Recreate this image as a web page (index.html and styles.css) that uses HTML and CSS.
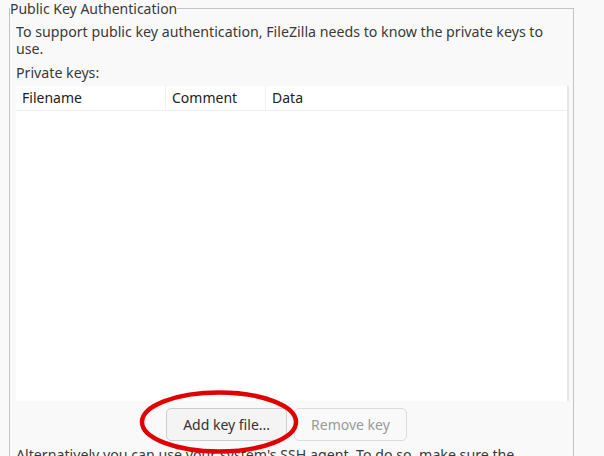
FILE: index.html
```html
<!DOCTYPE html>
<html>
<head>
<meta charset="utf-8">
<link rel="stylesheet" href="styles.css">
</head>
<body>
<div class="page">
  <fieldset class="group">
    <legend class="group-title">Public Key Authentication</legend>
    <div class="group-body">
      <p class="intro">To support public key authentication, FileZilla needs to know the private keys to use.</p>
      <p class="label">Private keys:</p>
      <div class="list">
        <div class="list-head">
          <div class="col col-file">Filename</div>
          <div class="col col-comment">Comment</div>
          <div class="col col-data">Data</div>
        </div>
        <div class="list-rows"></div>
      </div>
      <div class="buttons">
        <button class="btn">Add key file...</button>
        <button class="btn btn-disabled" disabled>Remove key</button>
      </div>
      <p class="intro">Alternatively you can use your system's SSH agent. To do so, make sure the</p>
    </div>
  </fieldset>
  <svg class="mark" width="164" height="68" viewBox="0 0 164 68">
    <ellipse cx="82" cy="34" rx="77" ry="29.5" fill="none" stroke="#e00000" stroke-width="4.5"/>
  </svg>
</div>
</body>
</html>
```
FILE: styles.css
```css
html, body {
  margin: 0;
  padding: 0;
  background: #f9f9f9;
  overflow: hidden;
}
body {
  width: 604px;
  height: 456px;
  font-family: "Noto Sans", sans-serif;
  font-size: 14px;
  color: #3a3a3a;
}
.page {
  position: relative;
  padding-left: 9px;
  width: 565px;
}
.group {
  margin: 0;
  padding: 0 4px 0 0;
  border: 1px solid #c4c4c4;
  border-bottom: none;
  min-width: 0;
  height: 470px;
  box-sizing: border-box;
}
.group-title {
  padding: 0;
  margin-left: 0;
  line-height: 17px;
  color: #3a3a3a;
}
.group-body {
  padding: 6px 0 0 6px;
}
.intro {
  margin: 0;
  font-size: 14.2px;
  line-height: 17px;
}
.label {
  margin: 7px 0 5px;
  font-size: 14.2px;
  line-height: 17px;
}
.list {
  background: #fff;
  height: 315px;
  border-right: 2px solid #e6e6e6;
  box-sizing: border-box;
}
.list-head {
  display: flex;
  height: 24px;
  border-bottom: 1px solid #f0f0f0;
  color: #222;
}
.col {
  line-height: 24px;
  padding-left: 6px;
  box-sizing: border-box;
  border-right: 1px solid #f0f0f0;
}
.col-file { width: 150px; }
.col-comment { width: 100px; }
.col-data { flex: 1; border-right: none; }
.buttons {
  display: flex;
  justify-content: center;
  gap: 7px;
  padding: 7px 0 5px;
  margin-left: -12px;
}
.btn {
  height: 33px;
  padding: 0 16px;
  font-family: inherit;
  font-size: 14px;
  color: #333;
  background: #f4f4f4;
  border: 1px solid #cdcdcd;
  border-radius: 5px;
}
.btn-disabled {
  color: #9a9a9a;
  background: #f9f9f9;
  border-color: #dcdcdc;
}
.mark {
  position: absolute;
  left: 137px;
  top: 388px;
}
```
